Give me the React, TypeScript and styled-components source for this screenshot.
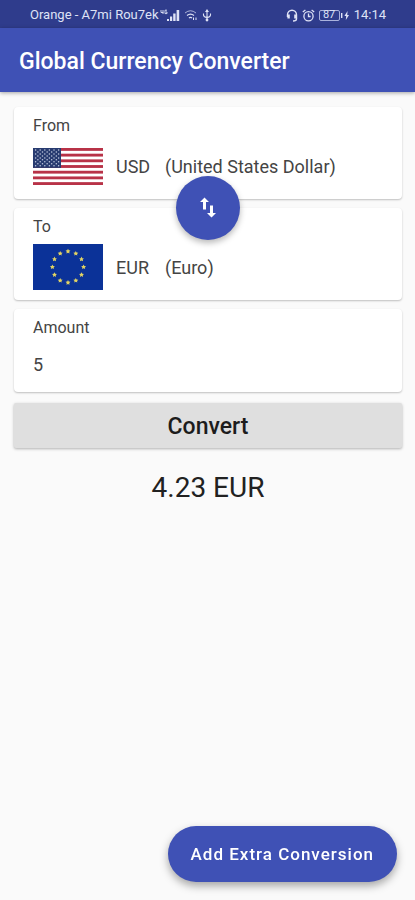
import React, { useState } from "react";
import styled, { createGlobalStyle } from "styled-components";

const GlobalStyle = createGlobalStyle`
  *, *::before, *::after { box-sizing: border-box; }
  body {
    margin: 0;
    background: #fafafa;
    color: #212121;
    font-family: Roboto, "Liberation Sans", sans-serif;
  }
  button, input { font: inherit; color: inherit; }
`;

const Screen = styled.div`
  display: flex;
  flex-direction: column;
  min-height: 100vh;
`;

const StatusBar = styled.div`
  display: flex;
  align-items: center;
  justify-content: space-between;
  height: 28px;
  padding: 2px 29px 0 30px;
  background: #2f3c8c;
  color: #dfe3f6;
  font-size: 13px;
  line-height: 16px;
`;

const StatusGroup = styled.div<{ $gap: number }>`
  display: flex;
  align-items: center;
  gap: ${({ $gap }) => $gap}px;
`;

const AppBar = styled.header`
  display: flex;
  align-items: center;
  height: 64px;
  padding: 4px 19px 0;
  background: #3f51b5;
  box-shadow: 0 1px 4px rgba(0, 0, 0, 0.35);
`;

const Title = styled.h1`
  margin: 0;
  color: #fff;
  font-size: 23px;
  font-weight: 500;
  line-height: 28px;
`;

const Content = styled.main`
  display: flex;
  flex: 1;
  flex-direction: column;
  gap: 9px;
  padding: 15px 13px 96px 14px;
`;

const Card = styled.section`
  position: relative;
  display: flex;
  flex-direction: column;
  padding: 9px 19px 8px;
  background: #fff;
  border-radius: 4px;
  box-shadow: 0 1px 2px rgba(0, 0, 0, 0.24);
`;

const CurrencyCard = styled(Card)`
  min-height: 92px;
`;

const AmountCard = styled(Card)`
  min-height: 83px;
`;

const Label = styled.label`
  color: #444;
  font-size: 16px;
  line-height: 20px;
`;

const CurrencyButton = styled.button`
  display: flex;
  align-items: center;
  height: 50px;
  margin-top: 5px;
  padding: 0;
  border: 0;
  background: none;
  color: #444;
  font-size: 18px;
  text-align: left;
  cursor: pointer;
`;

const Flag = styled.svg`
  display: block;
  width: 70px;
  margin-right: 13px;
`;

const Code = styled.span`
  min-width: 49px;
`;

const SwapButton = styled.button`
  position: absolute;
  z-index: 1;
  top: 0;
  left: 50%;
  display: flex;
  align-items: center;
  justify-content: center;
  width: 64px;
  height: 64px;
  padding: 0;
  border: 0;
  border-radius: 50%;
  background: #3f51b5;
  box-shadow: 0 3px 6px rgba(0, 0, 0, 0.28);
  transform: translate(-50%, -50%);
  cursor: pointer;
`;

const AmountInput = styled.input`
  width: 100%;
  height: 46px;
  padding: 7px 0 0;
  border: 0;
  outline: 0;
  background: none;
  color: #444;
  font-size: 18px;
`;

const ConvertButton = styled.button`
  height: 45px;
  margin-top: 2px;
  padding: 2px 0 0;
  border: 0;
  border-radius: 2px;
  background: #dfdfdf;
  box-shadow: 0 1px 3px rgba(0, 0, 0, 0.3);
  color: #1c1c1c;
  font-size: 23px;
  font-weight: 500;
  cursor: pointer;
`;

const Result = styled.output`
  margin-top: 14px;
  font-size: 28px;
  line-height: 34px;
  text-align: center;
`;

const AddButton = styled.button`
  position: fixed;
  right: 18px;
  bottom: 18px;
  height: 56px;
  padding: 0 23px;
  border: 0;
  border-radius: 28px;
  background: #3f51b5;
  box-shadow: 0 4px 8px rgba(0, 0, 0, 0.34);
  color: #fff;
  font-size: 17px;
  font-weight: 500;
  letter-spacing: 1px;
  cursor: pointer;
`;

function UsFlag() {
  const stars = Array.from({ length: 9 }, (_, row) =>
    Array.from({ length: row % 2 ? 5 : 6 }, (_, col) => (
      <circle
        key={`${row}-${col}`}
        cx={2.6 + col * 4.6 + (row % 2 ? 2.3 : 0)}
        cy={2.1 + row * 1.95}
        r="0.75"
      />
    )),
  );
  return (
    <Flag viewBox="0 0 70 37" height="37" aria-hidden="true">
      <rect width="70" height="37" fill="#fff" />
      {Array.from({ length: 7 }, (_, i) => (
        <rect key={i} y={i * 5.69} width="70" height="2.85" fill="#b83247" />
      ))}
      <rect width="28" height="19.9" fill="#283b70" />
      <g fill="#c3cbe0">{stars}</g>
    </Flag>
  );
}

function EuFlag() {
  const star = Array.from({ length: 10 }, (_, i) => {
    const radius = i % 2 ? 1.3 : 2.6;
    const angle = (i * Math.PI) / 5;
    return `${radius * Math.sin(angle)},${-radius * Math.cos(angle)}`;
  }).join(" ");
  return (
    <Flag viewBox="0 0 70 46" height="46" aria-hidden="true">
      <rect width="70" height="46" fill="#0b3298" />
      {Array.from({ length: 12 }, (_, i) => {
        const angle = (i * Math.PI) / 6;
        return (
          <polygon
            key={i}
            points={star}
            fill="#e3d463"
            transform={`translate(${35 + 15.6 * Math.sin(angle)} ${23 - 15.6 * Math.cos(angle)})`}
          />
        );
      })}
    </Flag>
  );
}

function SwapIcon() {
  return (
    <svg width="24" height="24" viewBox="0 0 24 24" fill="#fff" aria-hidden="true">
      <path d="M8.5 1.5 L13 6 H10 V13.5 H7 V6 H4 Z" />
      <path d="M15.5 21.5 L20 17 H17 V9.5 H14 V17 H11 Z" />
    </svg>
  );
}

function SignalIcon() {
  return (
    <svg width="20" height="13" viewBox="0 0 20 13" aria-hidden="true">
      <path d="M1 1 V3.5 H3.4 M3 1 V5 M7 1.2 H5 V4.6 H7 V3 H6" fill="none" stroke="currentColor" strokeWidth="0.9" />
      <path d="M7 10h2v2H7z M10 7.5h2.2V12H10z M13.2 4.5h2.4V12h-2.4z M16.6 1h2.6v11h-2.6z" fill="currentColor" />
    </svg>
  );
}

function WifiIcon() {
  return (
    <svg width="14" height="12" viewBox="0 0 14 12" fill="none" stroke="currentColor" aria-hidden="true">
      <path d="M1 4 Q6.5 -0.5 12 4" strokeWidth="1" opacity="0.7" />
      <path d="M3 6.5 Q6.5 3.8 10 6.5" strokeWidth="1.3" />
      <path d="M5 9 Q6.5 7.8 8 9" strokeWidth="1.3" />
      <path d="M9.5 8.5 V11 M12 11 V8.5" strokeWidth="1" />
    </svg>
  );
}

function UsbIcon() {
  return (
    <svg width="10" height="13" viewBox="0 0 10 13" fill="none" stroke="currentColor" strokeWidth="1.1" aria-hidden="true">
      <path d="M5 2 V11 M1.5 4.5 V6 Q1.5 8 5 8.5 Q8.5 8 8.5 6 V4.5" />
      <path d="M5 0 L7 3 H3 Z" fill="currentColor" stroke="none" />
      <circle cx="5" cy="11" r="1.4" fill="currentColor" stroke="none" />
    </svg>
  );
}

function HeadsetIcon() {
  return (
    <svg width="12" height="13" viewBox="0 0 12 13" fill="none" stroke="currentColor" aria-hidden="true">
      <path d="M1.5 8 V5.8 A4.5 4.5 0 0 1 10.5 5.8 V10 Q10.5 12 7 12" strokeWidth="1.4" />
      <path d="M2.6 5.5 V9.5 M9.4 5.5 V9.5" strokeWidth="2.4" />
    </svg>
  );
}

function AlarmIcon() {
  return (
    <svg width="13" height="13" viewBox="0 0 13 13" fill="none" stroke="currentColor" strokeWidth="1.3" aria-hidden="true">
      <circle cx="6.5" cy="7.2" r="4.6" />
      <path d="M0.8 3 L3.4 1 M12.2 3 L9.6 1 M6.5 4.5 V7.5 H8.6" />
    </svg>
  );
}

const BatteryFrame = styled.span`
  display: flex;
  align-items: center;
  justify-content: center;
  width: 21px;
  height: 11px;
  border: 1px solid #aab2dc;
  border-radius: 2px;
  font-size: 11px;
  line-height: 10px;
`;

function ChargeIcon() {
  return (
    <svg width="9" height="11" viewBox="0 0 9 11" fill="currentColor" aria-hidden="true">
      <path d="M0 3h1.4v5H0z M6.6 1 L3.4 6 H5.2 L4.8 10 L8 5 H6.2 Z" />
    </svg>
  );
}

interface Currency {
  code: string;
  name: string;
  flag: React.ReactNode;
}

const dollar: Currency = { code: "USD", name: "United States Dollar", flag: <UsFlag /> };
const euro: Currency = { code: "EUR", name: "Euro", flag: <EuFlag /> };

function CurrencyPicker({ id, label, currency }: { id: string; label: string; currency: Currency }) {
  return (
    <>
      <Label htmlFor={id}>{label}</Label>
      <CurrencyButton id={id} type="button">
        {currency.flag}
        <Code>{currency.code}</Code>
        <span>({currency.name})</span>
      </CurrencyButton>
    </>
  );
}

export default function App() {
  const [pair, setPair] = useState<[Currency, Currency]>([dollar, euro]);
  const [amount, setAmount] = useState("5");
  const [result, setResult] = useState("4.23 EUR");
  const [from, to] = pair;

  const convert = () => {
    const rate = from === dollar ? 0.846 : 1 / 0.846;
    setResult(`${(Number(amount) * rate).toFixed(2)} ${to.code}`);
  };

  return (
    <Screen>
      <GlobalStyle />
      <StatusBar>
        <StatusGroup $gap={4}>
          <StatusGroup $gap={1}>
            <span>Orange - A7mi Rou7ek</span>
            <SignalIcon />
          </StatusGroup>
          <WifiIcon />
          <UsbIcon />
        </StatusGroup>
        <StatusGroup $gap={4}>
          <HeadsetIcon />
          <AlarmIcon />
          <StatusGroup $gap={1}>
            <BatteryFrame>87</BatteryFrame>
            <ChargeIcon />
          </StatusGroup>
          <span>14:14</span>
        </StatusGroup>
      </StatusBar>
      <AppBar>
        <Title>Global Currency Converter</Title>
      </AppBar>
      <Content>
        <CurrencyCard>
          <CurrencyPicker id="from" label="From" currency={from} />
        </CurrencyCard>
        <CurrencyCard>
          <SwapButton type="button" aria-label="Swap currencies" onClick={() => setPair([to, from])}>
            <SwapIcon />
          </SwapButton>
          <CurrencyPicker id="to" label="To" currency={to} />
        </CurrencyCard>
        <AmountCard>
          <Label htmlFor="amount">Amount</Label>
          <AmountInput
            id="amount"
            inputMode="decimal"
            value={amount}
            onChange={(event) => setAmount(event.target.value)}
          />
        </AmountCard>
        <ConvertButton type="button" onClick={convert}>
          Convert
        </ConvertButton>
        <Result htmlFor="amount">{result}</Result>
      </Content>
      <AddButton type="button">Add Extra Conversion</AddButton>
    </Screen>
  );
}
